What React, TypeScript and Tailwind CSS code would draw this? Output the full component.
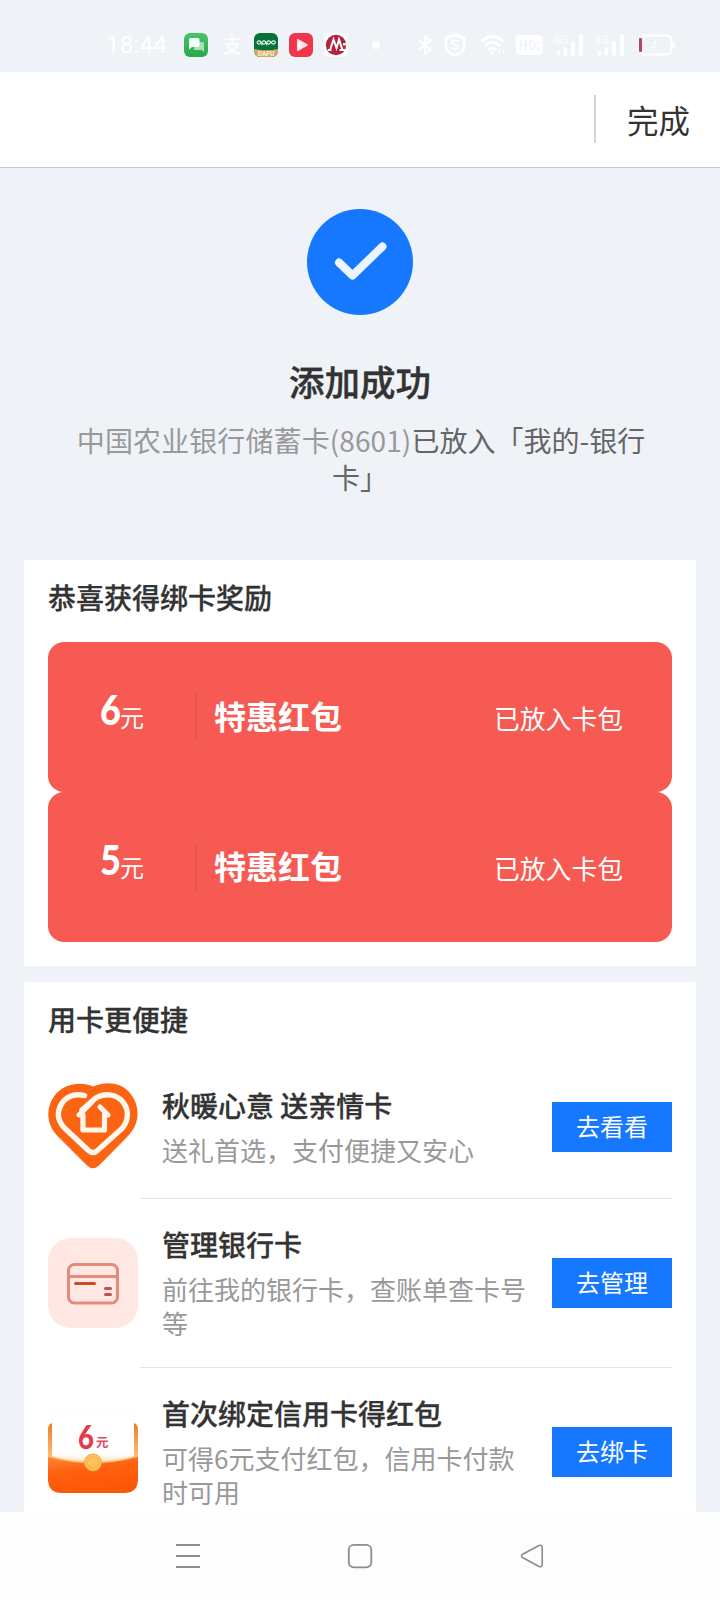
import type { ReactNode } from "react";

function Signal() {
  return (
    <svg width="31" height="24" viewBox="0 0 31 24" fill="#fff">
      <text x="0" y="10.5" fontSize="12.5" fontFamily="Roboto, sans-serif" opacity="0.85">4G</text>
      <rect x="4" y="18" width="3.4" height="4.5" rx="1" />
      <rect x="10.5" y="14.5" width="3.8" height="8" rx="1" />
      <rect x="18" y="8.5" width="3.8" height="14" rx="1" />
      <rect x="26" y="1.5" width="4" height="21" rx="1" />
    </svg>
  );
}

function StatusBar() {
  return (
    <div className="flex h-[72px] shrink-0 items-center pt-[18px] pl-[106px] text-white">
      <span className="w-[78px] font-[Roboto,sans-serif] text-[24px] leading-6 tracking-[0.2px]">18:44</span>
      <svg width="24" height="24" viewBox="0 0 24 24">
        <defs>
          <linearGradient id="msg" x1="0" y1="0" x2="0" y2="1">
            <stop offset="0" stopColor="#4cc26c" />
            <stop offset="1" stopColor="#27a84c" />
          </linearGradient>
        </defs>
        <rect width="24" height="24" rx="6" fill="url(#msg)" />
        <path d="M10 9h8.500q1.500 0 1.500 1.500v8.500l-2.500-2H10z" fill="#a5e2b3" />
        <path d="M6.500 5h7.500q1.500 0 1.500 1.500v6q0 1.500-1.500 1.500H8l-3 2.500V6.500Q5 5 6.500 5z" fill="#f2fff4" />
      </svg>
      <span className="ml-[14px] w-[32px] font-['Noto_Sans_CJK_SC',sans-serif] text-[20px] leading-6 font-medium opacity-90">支</span>
      <svg width="24" height="24" viewBox="0 0 24 24">
        <clipPath id="oppo"><rect width="24" height="24" rx="6" /></clipPath>
        <g clipPath="url(#oppo)">
          <rect width="24" height="24" fill="#08703a" />
          <path d="M0 16q12 2.500 24 0v8H0z" fill="#d8a866" />
          <g fill="none" stroke="#e6fff0" strokeWidth="1.100">
            <ellipse cx="5" cy="9.500" rx="1.900" ry="1.600" />
            <ellipse cx="9.800" cy="9.500" rx="1.900" ry="1.600" />
            <ellipse cx="14.600" cy="9.500" rx="1.900" ry="1.600" />
            <ellipse cx="19.400" cy="9.500" rx="1.900" ry="1.600" />
            <path d="M7.900 9.500v2.800M12.700 9.500v2.800" />
          </g>
          <text x="12" y="22.800" textAnchor="middle" fontSize="6.500" fontWeight="700" fontFamily="Roboto, sans-serif" fill="#fff4dd">DAFU</text>
        </g>
      </svg>
      <svg className="ml-[11px]" width="24" height="24" viewBox="0 0 24 24">
        <defs>
          <linearGradient id="play" x1="0" y1="0" x2="1" y2="0">
            <stop offset="0" stopColor="#fff" />
            <stop offset="1" stopColor="#ffc4cd" />
          </linearGradient>
        </defs>
        <rect width="24" height="24" rx="6" fill="#f0354f" />
        <path d="M8.700 6.700l9.300 5.300-9.300 5.300z" fill="url(#play)" stroke="#ffe3e7" strokeWidth="1.500" strokeLinejoin="round" />
      </svg>
      <svg className="ml-[11px]" width="24" height="24" viewBox="0 0 24 24">
        <rect width="24" height="24" rx="6" fill="#fff" opacity="0.8" />
        <circle cx="12" cy="12" r="10.200" fill="#b0243f" />
        <path d="M4 17h3.500M6 17L9.500 6.500l3 8.500L15 6.500 18.500 17M15.500 17H21" fill="none" stroke="#fff" strokeWidth="2" />
        <path d="M19 10h4v2.500h-4z" fill="#e8f0ef" />
      </svg>
      <span className="ml-[24px] size-2 rounded-full bg-white" />
      <svg className="ml-[37px]" width="18" height="22" viewBox="0 0 18 22" fill="none" stroke="#fff" strokeWidth="2">
        <path d="M2 6l12 10-6 4V2l6 4L2 16" strokeLinejoin="round" />
      </svg>
      <svg className="ml-[8px]" width="24" height="24" viewBox="0 0 24 24" fill="none" stroke="#fff">
        <path d="M12 1.800l9 3v8.500q0 6-9 9.200-9-3.200-9-9.200V4.800z" strokeWidth="2.800" strokeLinejoin="round" />
        <path d="M15.300 8.800q-1-1.500-3.300-1.500-3 0-3 2.200 0 1.800 3 2.300t3 2.400q0 2.200-3 2.200-2.300 0-3.500-1.600" strokeWidth="1.900" />
      </svg>
      <svg className="ml-[13px]" width="26" height="24" viewBox="0 0 26 24" fill="none" stroke="#fff" strokeWidth="3">
        <path d="M1.500 8.500q11-10 22 0M5 13q7.500-7 15 0M8.500 17q4-3.500 8 0" />
        <circle cx="12.500" cy="20" r="1.800" fill="#fff" stroke="none" />
        <path d="M19.500 16.500v4M23.500 16.500v4" strokeWidth="1.600" />
      </svg>
      <svg className="ml-[10px]" width="27" height="22" viewBox="0 0 27 22">
        <rect x="0" y="1" width="27" height="20" rx="4" fill="#fff" />
        <path d="M4.500 6v10M10 6v10M4.500 11h5.500M14 6v10M14 7h1.500q3.500 0 3.500 4t-3.500 4h-1.500M22.500 8v2M22.500 13.500v2.500" fill="none" stroke="#eff3f8" strokeWidth="1.700" />
      </svg>
      <span className="ml-[10px]"><Signal /></span>
      <span className="ml-[10px]"><Signal /></span>
      <svg className="ml-[12px]" width="39" height="22" viewBox="0 0 39 22">
        <rect x="3" y="1.500" width="31.500" height="19" rx="5" fill="none" stroke="#fff" strokeWidth="2.200" />
        <path d="M36.500 8.500q2 2.500 0 5z" fill="#fff" stroke="#fff" />
        <rect x="2" y="4" width="3" height="14" rx="1" fill="#b04a62" />
        <text x="17" y="15.500" textAnchor="middle" fontSize="12" fontFamily="Roboto, sans-serif" fill="#fff" opacity="0.85">4</text>
      </svg>
    </div>
  );
}

function HeartIcon() {
  return (
    <svg width="90" height="90" viewBox="0 0 90 90" fill="none">
      <path
        d="M45 4.500C56-.5 72-1 82 11c10.500 13 10 30-1 42L51 83.500q-6 5.500-12 0L9 53.500C-2 42-2.500 25 7 13 16.500 1 34-.5 45 4.500z"
        fill="#fb6413"
      />
      <path
        d="M36.500 13.500C27 11 18 14.500 13.500 22c-5 8.500-3.500 17 3 24L40.500 68.500q4.500 4 9 0L74 46.500C80 39.500 81.500 30 76 21.500 69 10.500 54.500 11 46.500 17L34 28"
        stroke="#fff6ec"
        strokeWidth="5.400"
        strokeLinecap="round"
        strokeLinejoin="round"
      />
      <path d="M44 20L31 33h4v15h21.500V33H60L52 25" stroke="#fff6ec" strokeWidth="5.200" strokeLinecap="round" strokeLinejoin="round" />
    </svg>
  );
}

function CardIcon() {
  return (
    <svg width="90" height="90" viewBox="0 0 90 90" fill="none">
      <rect width="90" height="90" rx="23" fill="#ffe8e4" />
      <rect x="20.500" y="26.500" width="49" height="38.500" rx="6" stroke="#e48a7d" strokeWidth="3" />
      <path d="M21 38.500h48" stroke="#e48a7d" strokeWidth="3" />
      <path d="M27.500 45.500h19" stroke="#c94b2b" strokeWidth="3" strokeLinecap="round" />
      <path d="M57.500 50.500h5M57.500 56.500h5" stroke="#c4504c" strokeWidth="3" strokeLinecap="round" />
    </svg>
  );
}

function EnvelopeIcon() {
  return (
    <svg width="90" height="90" viewBox="0 0 90 90">
      <defs>
        <linearGradient id="pocket" x1="0" y1="0" x2="0.300" y2="1">
          <stop offset="0" stopColor="#ff8a3a" />
          <stop offset="0.450" stopColor="#ff600f" />
          <stop offset="1" stopColor="#fb5707" />
        </linearGradient>
        <linearGradient id="edge" x1="0" y1="0" x2="0" y2="1">
          <stop offset="0" stopColor="#ef7c22" />
          <stop offset="1" stopColor="#ffc27b" />
        </linearGradient>
        <linearGradient id="sheet" x1="0" y1="0" x2="0" y2="1">
          <stop offset="0.800" stopColor="#fff" />
          <stop offset="1" stopColor="#ffdca5" />
        </linearGradient>
      </defs>
      <path d="M0 21q1-4 4-5v36H0zM90 21q-1-4-4-5v36h4z" fill="url(#edge)" />
      <path d="M4.500 5q0-2 2-2h77q2 0 2 2v53h-81z" fill="url(#sheet)" stroke="#fcfafa" />
      <path d="M0 49q45 13 90 0v23q0 14-14 14H14Q0 86 0 72z" fill="url(#pocket)" />
      <path d="M0 49q45 13 90 0" fill="none" stroke="#ffc481" strokeWidth="1.500" />
      <circle cx="45" cy="55.500" r="8.500" fill="#ffc35c" stroke="#efa643" strokeWidth="1" />
      <circle cx="45" cy="55.500" r="5.500" fill="none" stroke="#f3ae45" strokeWidth="1" />
      <text x="30" y="41.500" fontSize="33" fontWeight="900" fontFamily="Lato, sans-serif" fill="#e63a4b" textLength="16" lengthAdjust="spacingAndGlyphs">6</text>
      <text x="48" y="40" fontSize="12.500" fontWeight="700" fontFamily="'Noto Sans CJK SC', sans-serif" fill="#dc4a5c">元</text>
    </svg>
  );
}

function Coupon({ amount }: { amount: string }) {
  return (
    <div className="flex h-[150px] items-center rounded-2xl bg-[#f75a53] text-white">
      <div className="flex w-[147px] items-baseline pb-[15px] pl-[52px]">
        <span className="w-[20px] font-[Lato,sans-serif] text-[41px] leading-[48px] font-black">
          <span className="inline-block origin-left scale-x-[0.88]">{amount}</span>
        </span>
        <span className="text-[24px] leading-[30px]"><span className="relative top-[2px]">元</span></span>
      </div>
      <div className="h-12 w-0.5 bg-[#ee544f]" />
      <div className="ml-[17px] flex-1 pb-[4px] text-[32px] leading-10 font-bold">特惠红包</div>
      <div className="pr-[49px] pt-px text-[25.800px] leading-9">已放入卡包</div>
    </div>
  );
}

type ServiceProps = { icon: ReactNode; title: string; desc: string; action: string; size: string };

function Service({ icon, title, desc, action, size }: ServiceProps) {
  return (
    <div className={`flex shrink-0 items-center ${size}`}>
      {icon}
      <div className="ml-6 w-[370px]">
        <h3 className="text-[28px] leading-9 font-medium text-[#333] whitespace-nowrap [-webkit-text-stroke:0.3px_#333]">{title}</h3>
        <p className="mt-2.5 text-[26px] leading-[34px] text-[#999]">{desc}</p>
      </div>
      <button className="ml-auto h-[50px] w-[120px] bg-[#1677ff] pb-[3px] text-[24px] leading-[46px] text-white">{action}</button>
    </div>
  );
}

export default function App() {
  return (
    <div className="flex h-[1600px] w-[720px] flex-col overflow-hidden bg-[#eff3f8] font-['Noto_Sans_CJK_SC',sans-serif]">
      <StatusBar />
      <header className="flex h-24 shrink-0 items-center justify-end border-b border-[#c4c6c9] bg-white pr-[30px] pb-[2px]">
        <div className="h-12 w-0.5 bg-[#d4d4d4]" />
        <span className="ml-[31px] text-[31.500px] leading-10 text-[#333]">完成</span>
      </header>

      <section className="flex h-[392px] shrink-0 flex-col items-center pt-[40px]">
        <svg width="108" height="108" viewBox="0 0 108 108">
          <circle cx="54" cy="54" r="53" fill="#1677ff" />
          <path d="M33 54.500L46.500 67.500 76.500 38.500" fill="none" stroke="#ecf5ff" strokeWidth="8" strokeLinecap="round" strokeLinejoin="round" />
        </svg>
        <h1 className="mt-[41px] text-[35.500px] leading-[48px] font-medium text-[#333] [-webkit-text-stroke:0.4px_#333]">添加成功</h1>
        <div className="mt-[17px] flex pl-[2px] text-[28px] leading-[37px] whitespace-nowrap text-[#666]">
          <p className="tracking-[0.1px] text-[#999]">中国农业银行储蓄卡(8601)</p>
          <p>已放入「我的-银行</p>
        </div>
        <p className="text-[28px] leading-[37px] text-[#666]">卡」</p>
      </section>

      <section className="mx-6 h-[406px] shrink-0 bg-white px-6 pt-[19px]">
        <h2 className="mb-[27px] text-[28px] leading-9 font-medium text-[#333] [-webkit-text-stroke:0.3px_#333]">恭喜获得绑卡奖励</h2>
        <Coupon amount="6" />
        <Coupon amount="5" />
      </section>

      <section className="mx-6 mt-4 flex h-[530px] shrink-0 flex-col overflow-hidden bg-white px-6 pt-[19px]">
        <h2 className="mb-[19px] shrink-0 text-[28px] leading-9 font-medium text-[#333] [-webkit-text-stroke:0.3px_#333]">用卡更便捷</h2>
        <Service size="h-[142px]" icon={<HeartIcon />} title="秋暖心意 送亲情卡" desc="送礼首选，支付便捷又安心" action="去看看" />
        <div className="ml-[92px] h-px shrink-0 bg-[#e4e4e4]" />
        <Service size="h-[168px]" icon={<CardIcon />} title="管理银行卡" desc="前往我的银行卡，查账单查卡号等" action="去管理" />
        <div className="ml-[92px] h-px shrink-0 bg-[#e4e4e4]" />
        <Service size="h-[168px]" icon={<EnvelopeIcon />} title="首次绑定信用卡得红包" desc="可得6元支付红包，信用卡付款时可用" action="去绑卡" />
      </section>

      <nav className="flex h-[88px] shrink-0 items-center justify-between bg-[#fdfdfd] px-[174px]">
        <svg width="28" height="28" viewBox="0 0 28 28" stroke="#8c8c8c" strokeWidth="2">
          <path d="M2 3h24M2 14h24M2 25h24" />
        </svg>
        <svg width="28" height="28" viewBox="0 0 28 28" fill="none" stroke="#8c8c8c" strokeWidth="1.800">
          <rect x="2.800" y="2.800" width="22.500" height="22.500" rx="5" />
        </svg>
        <svg width="28" height="28" viewBox="0 0 28 28" fill="none" stroke="#8c8c8c" strokeWidth="1.600" strokeLinejoin="round">
          <path d="M4.500 12.300Q2.500 14 4.500 15.500L21 24.500q3 1 3.200-2V5.500q-.2-3-3.200-2z" />
        </svg>
      </nav>
    </div>
  );
}
